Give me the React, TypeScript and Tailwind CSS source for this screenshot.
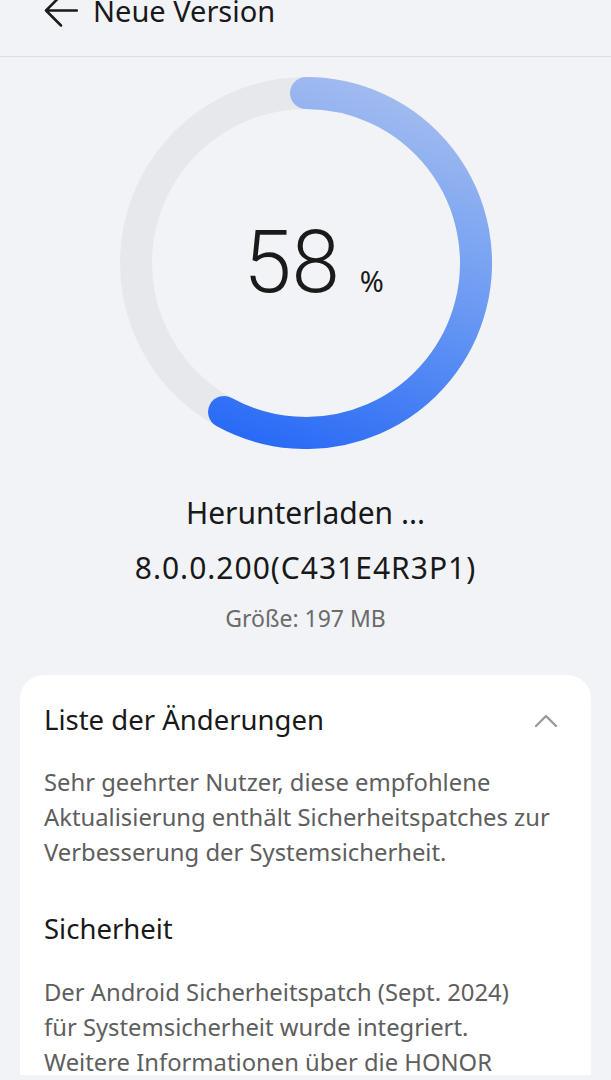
import React from "react";

export default function App() {
  const ex = 186 + 170 * Math.sin((208.8 * Math.PI) / 180);
  const ey = 186 - 170 * Math.cos((208.8 * Math.PI) / 180);
  return (
    <div
      className="w-[611px] h-[1080px] overflow-hidden bg-[#f1f3f6] text-[#191919]"
      style={{ fontFamily: "'Noto Sans', Roboto, sans-serif" }}
    >
      {/* header */}
      <div className="h-[57px] border-b border-[#dcdde1] flex items-start">
        <div className="flex items-center mt-[-5px] h-[32px]">
          <svg width="34" height="34" viewBox="0 0 34 34" className="ml-[44px] mt-[-1px]" fill="none">
            <path d="M33 16.5H2M17 1.5L2 16.5L17 31.5" stroke="#1a1a1a" strokeWidth="2.5" strokeLinecap="round" strokeLinejoin="round" />
          </svg>
          <div className="ml-[15px] text-[29px] leading-[32px]">Neue Version</div>
        </div>
      </div>

      {/* ring */}
      <div className="flex justify-center mt-[20px]">
        <div className="relative w-[372px] h-[372px]">
          <svg width="372" height="372" viewBox="0 0 372 372">
            <defs>
              <linearGradient id="g" gradientUnits="userSpaceOnUse" x1="250" y1="10" x2="130" y2="360">
                <stop offset="0" stopColor="#a1bbef" />
                <stop offset="0.45" stopColor="#6e9cf3" />
                <stop offset="1" stopColor="#2a6bf6" />
              </linearGradient>
            </defs>
            <circle cx="186" cy="186" r="170" fill="none" stroke="#e6e8ec" strokeWidth="32" />
            <path
              d={`M186 16 A170 170 0 1 1 ${ex.toFixed(2)} ${ey.toFixed(2)}`}
              fill="none"
              stroke="url(#g)"
              strokeWidth="32"
              strokeLinecap="round"
            />
          </svg>
          <div className="absolute inset-0 flex items-center justify-center">
            <div className="flex items-baseline ml-[16px] mt-[-2px]">
              <span className="text-[87px] leading-none font-light text-[#1a1a1a]" style={{ fontFamily: "Roboto, sans-serif" }}>58</span>
              <span className="ml-[20px] text-[29px] leading-none text-[#1a1a1a]">%</span>
            </div>
          </div>
        </div>
      </div>

      {/* status */}
      <div className="flex flex-col items-center mt-[46px]">
        <div className="text-[30px] leading-[36px]">Herunterladen ...</div>
        <div className="text-[30px] leading-[36px] mt-[19px] tracking-[1px]">8.0.0.200(C431E4R3P1)</div>
        <div className="text-[23px] leading-[28px] mt-[18px] text-[#6b6b6b]">Größe: 197 MB</div>
      </div>

      {/* card */}
      <div className="mx-[20px] mt-[43px] bg-white rounded-t-[24px] px-[24px] pt-[29px] h-[400px]">
        <div className="flex items-center justify-between">
          <div className="text-[27.5px] leading-[32px]">Liste der Änderungen</div>
          <svg width="24" height="14" viewBox="0 0 24 14" fill="none" className="mr-[9px] mt-[2px]">
            <path d="M2 12L12 2L22 12" stroke="#9a9a9a" strokeWidth="2.4" strokeLinecap="round" strokeLinejoin="round" />
          </svg>
        </div>
        <p className="mt-[29px] text-[23.8px] leading-[35px] text-[#5e5e5e] whitespace-nowrap">
          Sehr geehrter Nutzer, diese empfohlene
          <br />
          Aktualisierung enthält Sicherheitspatches zur
          <br />
          Verbesserung der Systemsicherheit.
        </p>
        <div className="mt-[43px] text-[27.5px] leading-[32px]">Sicherheit</div>
        <p className="mt-[30px] text-[23.8px] leading-[35px] text-[#5e5e5e] whitespace-nowrap">
          Der Android Sicherheitspatch (Sept. 2024)
          <br />
          für Systemsicherheit wurde integriert.
          <br />
          Weitere Informationen über die HONOR
        </p>
      </div>
    </div>
  );
}
